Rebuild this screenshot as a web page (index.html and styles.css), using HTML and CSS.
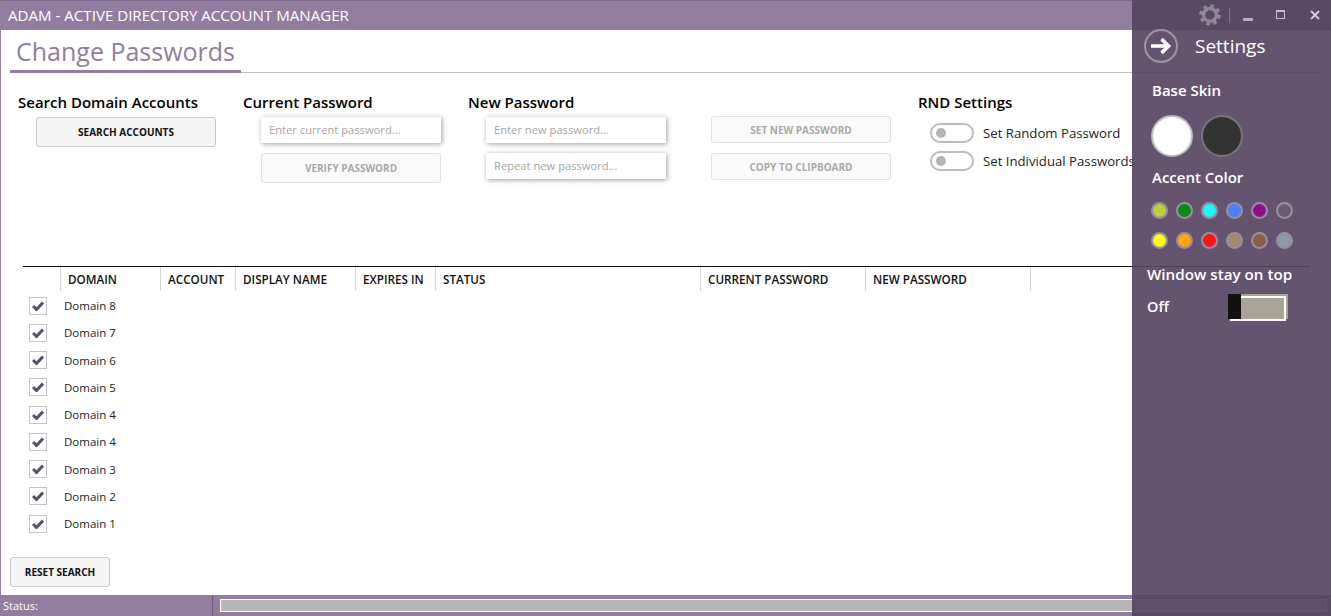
FILE: index.html
```html
<!DOCTYPE html>
<html>
<head>
	<title>ADAM - Active Directory Account Manager</title>
	<link rel="stylesheet" href="styles.css">
</head>
<body>
	<div class="window">
		<div class="titlebar">ADAM - ACTIVE DIRECTORY ACCOUNT MANAGER</div>

		<div class="tabs"><h1 class="tab">Change Passwords</h1></div>

		<div class="tools">
			<div class="tool">
				<h2>Search Domain Accounts</h2>
				<button class="btn">SEARCH ACCOUNTS</button>
			</div>
			<div class="tool">
				<h2>Current Password</h2>
				<input class="field" type="text" placeholder="Enter current password...">
				<button class="btn btn-off btn-tall">VERIFY PASSWORD</button>
			</div>
			<div class="tool">
				<h2>New Password</h2>
				<input class="field" type="text" placeholder="Enter new password...">
				<input class="field" type="text" placeholder="Repeat new password...">
			</div>
			<div class="tool tool-nohead">
				<button class="btn btn-off">SET NEW PASSWORD</button>
				<button class="btn btn-off">COPY TO CLIPBOARD</button>
			</div>
			<div class="tool tool-rnd">
				<h2>RND Settings</h2>
				<div class="switch-row"><span class="switch"></span>Set Random Password</div>
				<div class="switch-row"><span class="switch"></span>Set Individual Passwords</div>
			</div>
		</div>

		<div class="grid">
			<div class="grid-head">
				<div class="col col-check"></div>
				<div class="col col-domain">DOMAIN</div>
				<div class="col col-account">ACCOUNT</div>
				<div class="col col-display">DISPLAY NAME</div>
				<div class="col col-expires">EXPIRES IN</div>
				<div class="col col-status">STATUS</div>
				<div class="col col-current">CURRENT PASSWORD</div>
				<div class="col col-new">NEW PASSWORD</div>
			</div>
			<div class="grid-row"><span class="check"><svg viewBox="0 0 12 10"><path d="M1 5l3.500 3.500L11 1.500"/></svg></span>Domain 8</div>
			<div class="grid-row"><span class="check"><svg viewBox="0 0 12 10"><path d="M1 5l3.500 3.500L11 1.500"/></svg></span>Domain 7</div>
			<div class="grid-row"><span class="check"><svg viewBox="0 0 12 10"><path d="M1 5l3.500 3.500L11 1.500"/></svg></span>Domain 6</div>
			<div class="grid-row"><span class="check"><svg viewBox="0 0 12 10"><path d="M1 5l3.500 3.500L11 1.500"/></svg></span>Domain 5</div>
			<div class="grid-row"><span class="check"><svg viewBox="0 0 12 10"><path d="M1 5l3.500 3.500L11 1.500"/></svg></span>Domain 4</div>
			<div class="grid-row"><span class="check"><svg viewBox="0 0 12 10"><path d="M1 5l3.500 3.500L11 1.500"/></svg></span>Domain 4</div>
			<div class="grid-row"><span class="check"><svg viewBox="0 0 12 10"><path d="M1 5l3.500 3.500L11 1.500"/></svg></span>Domain 3</div>
			<div class="grid-row"><span class="check"><svg viewBox="0 0 12 10"><path d="M1 5l3.500 3.500L11 1.500"/></svg></span>Domain 2</div>
			<div class="grid-row"><span class="check"><svg viewBox="0 0 12 10"><path d="M1 5l3.500 3.500L11 1.500"/></svg></span>Domain 1</div>
		</div>

		<div class="footer"><button class="btn btn-reset">RESET SEARCH</button></div>

		<div class="statusbar">
			<div class="status-label">Status:</div>
			<div class="progress"></div>
		</div>
	</div>

	<!-- Settings flyout, see-through over the window -->
	<div class="flyout">
		<div class="winbtns">
			<svg class="gear" viewBox="0 0 22 22">
				<circle cx="11" cy="11" r="6.500" class="gear-ring"/>
				<circle cx="11" cy="11" r="9" class="gear-teeth"/>
			</svg>
			<span class="winsep"></span>
			<span class="win-min"></span>
			<span class="win-max"></span>
			<svg class="win-close" viewBox="0 0 10 10"><path d="M1 1l8 8M9 1l-8 8"/></svg>
		</div>
		<div class="fly-head">
			<span class="back">
				<svg viewBox="0 0 22 18"><path d="M1 9H19M11.500 2l7 7-7 7"/></svg>
			</span>
			<span class="fly-title">Settings</span>
		</div>
		<h3 class="fly-label">Base Skin</h3>
		<div class="skins">
			<span class="skin skin-light"></span>
			<span class="skin skin-dark"></span>
		</div>
		<h3 class="fly-label">Accent Color</h3>
		<div class="swatches">
			<span class="swatch sw-lime"></span>
			<span class="swatch sw-green"></span>
			<span class="swatch sw-cyan"></span>
			<span class="swatch sw-blue"></span>
			<span class="swatch sw-purple"></span>
			<span class="swatch sw-mauve"></span>
			<span class="swatch sw-yellow"></span>
			<span class="swatch sw-orange"></span>
			<span class="swatch sw-red"></span>
			<span class="swatch sw-taupe"></span>
			<span class="swatch sw-brown"></span>
			<span class="swatch sw-steel"></span>
		</div>
		<div class="ontop">
			<h3 class="ontop-label">Window stay on top</h3>
			<div class="ontop-row">
				<span>Off</span>
				<span class="flip"><span class="flip-thumb"></span></span>
			</div>
		</div>
	</div>
</body>
</html>
```
FILE: styles.css
```css
* { box-sizing: border-box; }
html, body { margin: 0; height: 100%; overflow: hidden; }
body { background: #ffffff; font-family: "Open Sans", "Noto Sans", sans-serif; color: #111111; position: relative; }

.window { height: 616px; display: flex; flex-direction: column; border-left: 1px solid #927da0; }

.titlebar { height: 30px; margin-left: -1px; padding-left: 8px; background: #927da0; border-top: 1px solid #7d6a8d; color: #ffffff; font-size: 15.100px; line-height: 29px; }

.tabs { height: 43px; margin: 0 10px 0 9px; border-bottom: 1px solid #bdbdbd; }
.tab { display: inline-block; height: 43px; margin: 0; padding: 0 6px 0 6px; border-bottom: 3px solid #927da0; font-size: 25px; font-weight: normal; line-height: 43px; color: #927da0; }

.tools { height: 193px; display: flex; padding-left: 17px; }
.tool { width: 225px; padding-top: 20px; display: flex; flex-direction: column; align-items: flex-start; }
.tool h2 { margin: 0 0 5px 0; font-size: 15px; font-weight: 600; line-height: 19px; color: #000000; white-space: nowrap; }
.tool .btn, .tool .field { margin-left: 18px; }
.tool-nohead { padding-top: 43px; }
.tool-rnd { width: 240px; }
.tool-rnd h2 { margin-bottom: 11px; }

.btn { width: 180px; height: 30px; padding: 0; background: #f5f5f5; border: 1px solid #c6c6c6; border-radius: 3px; font-family: inherit; font-size: 10px; font-weight: 700; color: #111111; }
.btn-off { height: 27px; margin-bottom: 10px; background: #fafafa; border-color: #e2e2e2; color: #a9a9a9; }
.btn-tall { height: 30px; }
.btn-reset { width: 100px; }

.field { width: 180px; height: 26px; margin-bottom: 10px; padding: 0 8px 2px 8px; background: #ffffff; border: 0; outline: 0; box-shadow: 1px 1px 5px rgba(0, 0, 0, 0.38); font-family: inherit; font-size: 11.200px; }
.field::placeholder { color: #a6a6a6; opacity: 1; }

.switch-row { display: flex; align-items: center; height: 20px; margin: 0 0 8px 12px; font-size: 13.200px; color: #222222; white-space: nowrap; }
.switch { width: 44px; height: 20px; margin-right: 9px; border: 2px solid #bbbbbb; border-radius: 10px; position: relative; flex: none; }
.switch::after { content: ""; position: absolute; left: 4px; top: 3px; width: 10px; height: 10px; border-radius: 50%; background: #b5b5b5; }

.grid { flex: 1; margin: 0 21px 0 22px; border-top: 1px solid #111111; }
.grid-head { display: flex; height: 24px; }
.col { height: 24px; padding-left: 7px; border-right: 1px solid #d4d4d4; font-size: 11.700px; font-weight: 600; line-height: 25px; color: #111111; white-space: nowrap; }
.col-check { width: 38px; }
.col-domain { width: 100px; }
.col-account { width: 75px; }
.col-display { width: 120px; }
.col-expires { width: 80px; }
.col-status { width: 265px; }
.col-current { width: 165px; }
.col-new { width: 165px; }

.grid-row { display: flex; align-items: center; height: 27.250px; padding-left: 6px; font-size: 11.500px; color: #222222; }
.grid-head + .grid-row { margin-top: 1px; }
.check { display: flex; align-items: center; justify-content: center; width: 18px; height: 18px; margin-right: 17px; border: 1px solid #c4c4c4; }
.check svg { width: 12px; height: 10px; fill: none; stroke: #5d4d6b; stroke-width: 3; }

.footer { height: 38px; padding-left: 9px; }

.statusbar { height: 21px; margin-left: -1px; display: flex; align-items: center; background: #927da0; color: #ffffff; font-size: 11px; }
.status-label { width: 213px; height: 100%; padding-left: 3px; line-height: 22px; border-right: 1px solid #6f5f7c; }
.progress { flex: 1; height: 13px; margin: 0 4px 0 7px; background: #b7b7b7; border: 1px solid #ffffff; }

.flyout { position: absolute; top: 0; right: 0; width: 199px; height: 616px; background: rgba(85, 67, 97, 0.91); color: #ffffff; }

.winbtns { height: 30px; display: flex; align-items: center; padding-left: 67px; }
.gear { width: 22px; height: 22px; margin-top: -1px; fill: none; stroke: #8f8799; }
.gear-ring { stroke-width: 3.500; }
.gear-teeth { stroke-width: 3.500; stroke-dasharray: 3.600 3.470; }
.winsep { width: 1px; height: 15px; margin: 0 13px 0 8px; background: #7f7389; }
.win-min { width: 10px; height: 3px; margin: 9px 23px 0 0; background: #b5aebd; }
.win-max { width: 9px; height: 9px; margin: -1px 25px 0 0; border: 1px solid #c5c0cb; border-top-width: 2px; }
.win-close { width: 10px; height: 10px; margin-top: -1px; fill: none; stroke: #cfcbd4; stroke-width: 2; }

.fly-head { display: flex; align-items: center; height: 34px; margin: -1px 0 0 12px; }
.back { display: flex; align-items: center; justify-content: center; width: 34px; height: 34px; margin-right: 17px; border: 2px solid #9d94a5; border-radius: 50%; }
.back svg { width: 22px; height: 18px; fill: none; stroke: #ffffff; stroke-width: 3.600; }
.fly-title { font-size: 19px; line-height: 34px; }

.fly-label { margin: 0; padding-left: 20px; font-size: 15px; font-weight: 600; line-height: 20px; }
.fly-head + .fly-label { margin-top: 17px; }

.skins { display: flex; gap: 8px; height: 42px; margin: 15px 0 10px 19px; }
.skin { width: 42px; height: 42px; border-radius: 50%; }
.skin-light { background: #ffffff; border: 2px solid #bdbdbd; }
.skin-dark { background: #333333; border: 2px solid #777777; }

.swatches { display: grid; grid-template-columns: repeat(6, 25px); row-gap: 13px; margin: 15px 0 0 19px; }
.swatch { width: 17px; height: 17px; border-radius: 50%; border: 2px solid rgba(255, 255, 255, 0.35); background-clip: padding-box; }
.sw-lime { background-color: #b9d23a; }
.sw-green { background-color: #0a8a12; }
.sw-cyan { background-color: #19fbfb; }
.sw-blue { background-color: #4a82f5; }
.sw-purple { background-color: #8e0f8e; }
.sw-mauve { background-color: #6c5a78; }
.sw-yellow { background-color: #ffff0c; }
.sw-orange { background-color: #ffa510; }
.sw-red { background-color: #ff1414; }
.sw-taupe { background-color: #a5896a; }
.sw-brown { background-color: #8d5f44; }
.sw-steel { background-color: #8b9aa6; }

.ontop { margin: 15px 0 0 15px; }
.ontop-label { margin: 0; font-size: 15.200px; font-weight: 600; line-height: 20px; }
.ontop-row { display: flex; align-items: center; justify-content: space-between; width: 141px; height: 25px; margin-top: 10px; font-size: 14.500px; font-weight: 600; }
.flip { display: block; width: 60px; height: 25px; padding: 2px; background: #a8a498; position: relative; }
.flip::before { content: ""; display: block; height: 100%; border: 2px solid #ffffff; }
.flip-thumb { position: absolute; left: 0; top: 0; width: 13px; height: 25px; background: #111111; }
```
